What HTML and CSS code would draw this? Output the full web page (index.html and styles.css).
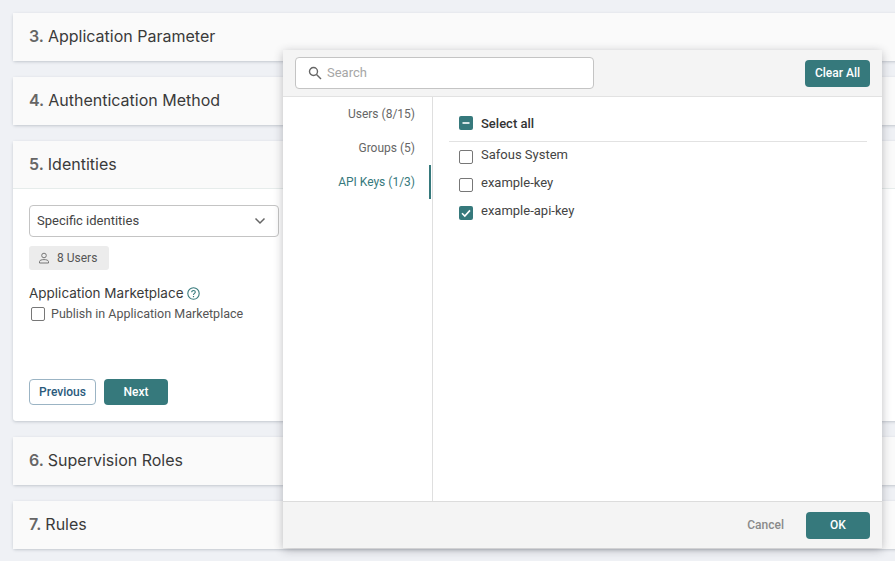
FILE: index.html
```html
<!DOCTYPE html>
<html lang="en">
<head>
    <meta charset="UTF-8">
    <meta name="viewport" content="width=device-width, initial-scale=1.0">
    <title>Application Wizard</title>
    <link rel="stylesheet" href="styles.css">
</head>
<body>
    <main class="steps">
        <section class="step">
            <h2 class="step-title"><span class="step-num">3.</span> Application Parameter</h2>
        </section>
        <section class="step">
            <h2 class="step-title"><span class="step-num">4.</span> Authentication Method</h2>
        </section>
        <section class="step step-open">
            <h2 class="step-title"><span class="step-num">5.</span> Identities</h2>
            <div class="step-body">
                <div class="select">
                    <span>Specific identities</span>
                    <svg width="12" height="8" viewBox="0 0 12 8"><path d="M1.5 1.5 6 6l4.5-4.5" fill="none" stroke="#666" stroke-width="1.5"/></svg>
                </div>
                <div class="chip">
                    <svg width="12" height="12" viewBox="0 0 12 12" fill="none" stroke="#777" stroke-width="1"><circle cx="6" cy="3.5" r="2.3"/><path d="M1.5 11V9.6C1.5 8.3 3.6 7.6 6 7.6s4.5.7 4.5 2V11z"/></svg>
                    <span>8 Users</span>
                </div>
                <div class="field-label">
                    Application Marketplace
                    <svg width="13" height="13" viewBox="0 0 13 13" fill="none" stroke="#36797c"><circle cx="6.5" cy="6.5" r="5.7" stroke-width="1.1"/><path d="M4.7 5.2c0-1 .8-1.7 1.8-1.7s1.8.7 1.8 1.6c0 1.3-1.8 1.4-1.8 2.8" stroke-width="1.1"/><path d="M6.5 9v1.2" stroke-width="1.2"/></svg>
                </div>
                <label class="check-line">
                    <span class="box"></span>
                    Publish in Application Marketplace
                </label>
                <div class="actions">
                    <button class="btn btn-outline">Previous</button>
                    <button class="btn btn-next">Next</button>
                </div>
            </div>
        </section>
        <section class="step">
            <h2 class="step-title"><span class="step-num">6.</span> Supervision Roles</h2>
        </section>
        <section class="step">
            <h2 class="step-title"><span class="step-num">7.</span> Rules</h2>
        </section>
    </main>

    <div class="modal">
        <div class="modal-head">
            <div class="search">
                <svg width="14" height="14" viewBox="0 0 14 14" fill="none" stroke="#666" stroke-width="1.4"><circle cx="5.5" cy="5.5" r="4"/><path d="M8.5 8.5 13 13"/></svg>
                <span>Search</span>
            </div>
            <button class="btn btn-clear">Clear All</button>
        </div>
        <div class="modal-body">
            <nav class="tabs">
                <div class="tab">Users (8/15)</div>
                <div class="tab">Groups (5)</div>
                <div class="tab tab-active">API Keys (1/3)</div>
            </nav>
            <div class="list">
                <div class="list-all">
                    <span class="box box-on">
                        <svg width="14" height="14" viewBox="0 0 14 14"><path d="M3.5 7h7" stroke="#fff" stroke-width="1.6"/></svg>
                    </span>
                    Select all
                </div>
                <div class="list-item"><span class="box"></span>Safous System</div>
                <div class="list-item"><span class="box"></span>example-key</div>
                <div class="list-item">
                    <span class="box box-on">
                        <svg width="14" height="14" viewBox="0 0 14 14"><path d="M3 7.2 5.8 10 11 4.4" fill="none" stroke="#fff" stroke-width="1.6"/></svg>
                    </span>
                    example-api-key
                </div>
            </div>
        </div>
        <div class="modal-foot">
            <button class="btn-cancel">Cancel</button>
            <button class="btn btn-ok">OK</button>
        </div>
    </div>
</body>
</html>
```

FILE: styles.css
```css
html, body {
    height: 100%;
}
body {
    margin: 0;
    overflow: hidden;
    background-color: #eff1f5;
    font-family: Roboto, Arial, sans-serif;
    color: #444;
}
button {
    font-family: inherit;
}
.steps {
    display: flex;
    flex-direction: column;
    gap: 16px;
    padding: 13px 0 0 13px;
    width: 920px;
}
.step {
    background-color: #fff;
    border-radius: 3px;
    box-shadow: 0 1px 3px rgba(60, 70, 90, 0.25);
}
.step-title {
    margin: 0;
    height: 48px;
    box-sizing: border-box;
    padding: 0 0 2px 16px;
    display: flex;
    align-items: center;
    gap: 4px;
    background-color: #fafafa;
    font-family: Inter, Arial, sans-serif;
    font-size: 16px;
    font-weight: 400;
    color: #3a3a3a;
}
.step-open .step-title {
    border-bottom: 1px solid #e6eceb;
}
.step-num {
    font-weight: 600;
    color: #666;
}
.step-body {
    height: 232px;
    padding: 16px;
    box-sizing: border-box;
    display: flex;
    flex-direction: column;
    align-items: flex-start;
}
.select {
    width: 250px;
    height: 32px;
    flex: none;
    box-sizing: border-box;
    padding: 0 12px 1px 7px;
    display: flex;
    align-items: center;
    justify-content: space-between;
    border: 1px solid #c4c4c4;
    border-radius: 4px;
    font-size: 13px;
    color: #444;
}
.chip {
    margin-top: 9px;
    width: 80px;
    height: 24px;
    flex: none;
    box-sizing: border-box;
    padding-left: 9px;
    display: flex;
    align-items: center;
    gap: 7px;
    background-color: #ececec;
    border-radius: 3px;
    font-size: 12px;
    color: #555;
}
.field-label {
    margin-top: 15px;
    display: flex;
    align-items: center;
    gap: 3px;
    font-family: Inter, Arial, sans-serif;
    font-size: 13.5px;
    color: #3a3a3a;
}
.check-line {
    margin-top: 5px;
    display: flex;
    align-items: center;
    gap: 6px;
    padding-left: 2px;
    font-size: 12.5px;
    color: #555;
}
.box {
    width: 14px;
    height: 14px;
    flex: none;
    box-sizing: border-box;
    border: 1.5px solid #777;
    border-radius: 2px;
    background-color: #fff;
}
.box-on {
    border: none;
    background-color: #36797c;
    display: flex;
}
.actions {
    margin-top: auto;
    display: flex;
    gap: 8px;
}
.btn {
    border: none;
    border-radius: 4px;
    font-size: 12px;
    font-weight: 500;
    color: #fff;
    background-color: #36797c;
    cursor: pointer;
}
.btn-outline {
    width: 67px;
    height: 26px;
    background-color: #fff;
    border: 1px solid #9bb4c4;
    color: #2a5a7c;
}
.btn-next {
    width: 64px;
    height: 26px;
}
.modal {
    position: absolute;
    left: 283px;
    top: 50px;
    width: 599px;
    height: 498px;
    display: flex;
    flex-direction: column;
    background-color: #fff;
    border-radius: 3px;
    box-shadow: 0 2px 10px rgba(40, 40, 50, 0.3);
}
.modal-head {
    height: 47px;
    flex: none;
    box-sizing: border-box;
    padding: 7px 12px;
    display: flex;
    align-items: center;
    justify-content: space-between;
    background-color: #f4f4f4;
    border-bottom: 1px solid #e2e2e2;
}
.search {
    width: 299px;
    height: 32px;
    box-sizing: border-box;
    padding: 0 0 1px 12px;
    display: flex;
    align-items: center;
    gap: 5px;
    background-color: #fff;
    border: 1px solid #c4c4c4;
    border-radius: 4px;
    font-size: 13px;
    color: #a6a6a6;
}
.btn-clear {
    width: 65px;
    height: 27px;
}
.modal-body {
    flex: 1;
    display: flex;
}
.tabs {
    width: 150px;
    box-sizing: border-box;
    border-right: 1px solid #dfdfdf;
    font-size: 12px;
    color: #666;
}
.tab {
    height: 34px;
    box-sizing: border-box;
    padding-right: 14px;
    margin-right: 1px;
    border-right: 2px solid transparent;
    display: flex;
    align-items: center;
    justify-content: flex-end;
}
.tab-active {
    color: #36797c;
    border-right-color: #36797c;
}
.list {
    flex: 1;
    padding: 0 15px 0 16px;
}
.list-all {
    height: 36px;
    padding: 8px 0 0 10px;
    display: flex;
    align-items: center;
    gap: 8px;
    border-bottom: 1px solid #e2e2e2;
    font-size: 13px;
    font-weight: 500;
    color: #333;
}
.list-item {
    height: 25px;
    padding: 0 0 3px 10px;
    display: flex;
    align-items: center;
    gap: 8px;
    font-size: 13px;
    color: #444;
}
.list-item .box {
    margin-top: 5px;
}
.modal-foot {
    height: 47px;
    flex: none;
    box-sizing: border-box;
    padding-right: 12px;
    display: flex;
    align-items: center;
    justify-content: flex-end;
    gap: 22px;
    background-color: #f4f4f4;
    border-top: 1px solid #dcdcdc;
}
.btn-cancel {
    border: none;
    background: none;
    padding: 0;
    font-size: 12px;
    font-weight: 500;
    color: #8a8a8a;
}
.btn-ok {
    width: 64px;
    height: 27px;
}
```
